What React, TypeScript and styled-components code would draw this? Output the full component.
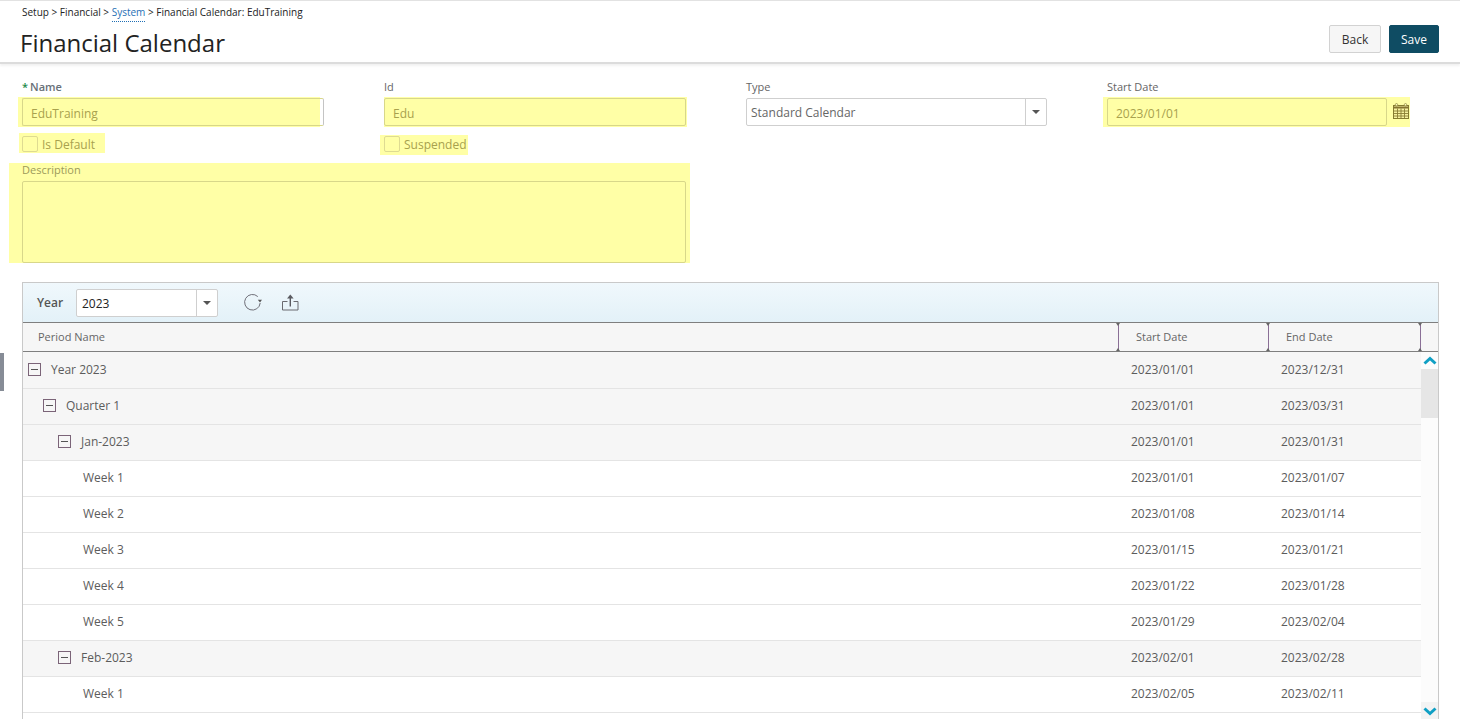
import styled, { createGlobalStyle } from "styled-components";

const GlobalStyle = createGlobalStyle`
  html, body {
    margin: 0;
    padding: 0;
    height: 100%;
    overflow: hidden;
    background: #fff;
    font-family: "Open Sans", "Liberation Sans", sans-serif;
    color: #444;
  }
  * { box-sizing: border-box; }
`;

const Page = styled.div`
  position: relative;
  height: 719px;
  overflow: hidden;
  border-top: 1px solid #e2e2e2;
`;

const SideTab = styled.div`
  position: absolute;
  left: 0;
  top: 352px;
  width: 4px;
  height: 38px;
  background: #868c96;
`;

const Header = styled.header`
  display: flex;
  justify-content: space-between;
  align-items: flex-start;
  height: 63px;
  padding: 0 21px 0 20px;
  border-bottom: 2px solid #dcdcdc;
  box-shadow: 0 2px 2px #f2f2f2;
`;

const Crumbs = styled.div`
  padding: 4px 0 0 2px;
  font-size: 10px;
  line-height: 14px;
  color: #222;
`;

const CrumbLink = styled.span`
  color: #1f6fb5;
  border-bottom: 1px dotted #1f6fb5;
  padding-bottom: 2px;
`;

const Title = styled.h1`
  margin: 8px 0 0;
  font-size: 24px;
  line-height: 32px;
  font-weight: 400;
  color: #222;
`;

const Actions = styled.div`
  display: flex;
  gap: 8px;
  padding-top: 24px;
`;

const Button = styled.button<{ $primary?: boolean }>`
  height: 28px;
  width: ${({ $primary }) => ($primary ? "50px" : "52px")};
  padding: 0;
  font: 12px "Open Sans", sans-serif;
  border-radius: 2px;
  border: 1px solid ${({ $primary }) => ($primary ? "#0f4c63" : "#d2d2d2")};
  background: ${({ $primary }) => ($primary ? "#0f4c63" : "#f6f6f6")};
  color: ${({ $primary }) => ($primary ? "#fff" : "#333")};
`;

const FormGrid = styled.section`
  display: grid;
  grid-template-columns: 362px 362px 361px 332px;
  padding: 16px 0 0 22px;
`;

const Field = styled.div`
  display: flex;
  flex-direction: column;
`;

const Label = styled.label`
  height: 17px;
  font-size: 11px;
  line-height: 14px;
  color: #666;
`;

const RequiredLabel = styled(Label)`
  font-weight: 600;
  color: #687078;
`;

const Star = styled.span`
  color: #1c8a4a;
  margin-right: 2px;
`;

const Highlight = styled.div<{ $left: number; $right: number; $plain?: boolean }>`
  display: flex;
  align-items: flex-start;
  height: 30px;
  padding-top: 1px;
  margin-left: -${({ $left }) => $left}px;
  padding-left: ${({ $left }) => $left}px;
  width: calc(${({ $right }) => $right}px + ${({ $left }) => $left}px);
  background: ${({ $plain }) => ($plain ? "none" : "#ffffa6")};
`;

const TextBox = styled.div<{ $width: number }>`
  flex: none;
  width: ${({ $width }) => $width}px;
  height: 28px;
  padding-left: 8px;
  font-size: 12px;
  line-height: 29px;
  color: #a8a14e;
  border: 1px solid #d8d78a;
  border-radius: 2px;
  background: #ffffa6;
`;

const NameBox = styled(TextBox)`
  border-color: #d8d78a #c4c4c4 #d8d78a #d8d78a;
  background: linear-gradient(to right, #ffffa6 297px, #fff 297px);
`;

const Select = styled.div<{ $width: number }>`
  display: flex;
  width: ${({ $width }) => $width}px;
  height: 28px;
  border: 1px solid #cfcfcf;
  border-radius: 2px;
  background: #fff;
  font-size: 12px;
  line-height: 28px;
`;

const SelectValue = styled.span<{ $dark?: boolean }>`
  flex: 1;
  padding-left: ${({ $dark }) => ($dark ? "5px" : "4px")};
  color: ${({ $dark }) => ($dark ? "#222" : "#666")};
`;

const SelectArrow = styled.span`
  display: flex;
  align-items: center;
  justify-content: center;
  width: 21px;
  border-left: 1px solid #cfcfcf;
  &::after {
    content: "";
    border-left: 4px solid transparent;
    border-right: 4px solid transparent;
    border-top: 4px solid #555;
  }
`;

const CalendarWrap = styled.span`
  display: flex;
  margin: 5px 0 0 6px;
`;

const CheckRow = styled.div<{ $left: number; $right: number; $top: number; $inset: number }>`
  display: flex;
  align-items: flex-start;
  gap: 4px;
  width: fit-content;
  height: 20px;
  margin: ${({ $top }) => $top}px 0 0 -${({ $left }) => $left}px;
  padding: ${({ $inset }) => $inset}px ${({ $right }) => $right}px 0 ${({ $left }) => $left}px;
  background: #ffffa6;
  font-size: 12px;
  line-height: 18px;
  color: #a8a14e;
`;

const CheckBox = styled.span`
  width: 16px;
  height: 16px;
  border: 1px solid #dedb92;
  border-radius: 2px;
`;

const DescriptionBlock = styled.div`
  display: flex;
  flex-direction: column;
  width: 681px;
  height: 100px;
  margin: 8px 0 19px 9px;
  padding: 0 4px 0 13px;
  background: #ffffa6;
`;

const DescriptionLabel = styled.label`
  height: 18px;
  font-size: 11px;
  line-height: 13px;
  color: #9c9a5a;
`;

const DescriptionBox = styled.div`
  flex: 1;
  border: 1px solid #d8d78a;
  border-radius: 2px;
`;

const Panel = styled.section`
  margin: 0 21px 0 22px;
  border: 1px solid #c9c9c9;
  border-bottom: none;
`;

const Toolbar = styled.div`
  display: flex;
  align-items: center;
  height: 40px;
  padding-left: 14px;
  background: linear-gradient(to bottom, #f0f8fc, #e3f1f8);
  border-bottom: 1px solid #7f7f7f;
`;

const ToolbarLabel = styled.span`
  width: 39px;
  font-size: 12px;
  font-weight: 600;
  color: #555;
`;

const ToolIcon = styled.span<{ $gap: number }>`
  display: flex;
  margin-left: ${({ $gap }) => $gap}px;
`;

const ColumnRow = styled.div`
  display: grid;
  grid-template-columns: 1095px 150px 152px 1fr;
  height: 29px;
  background: #f6f6f6;
  border-bottom: 1px solid #7f7f7f;
`;

const ColumnTitle = styled.div<{ $sep?: boolean }>`
  position: relative;
  padding-left: ${({ $sep }) => ($sep ? "17px" : "15px")};
  font-size: 11px;
  line-height: 28px;
  color: #666;
  ${({ $sep }) =>
    $sep &&
    `
    border-left: 1px solid #8a6f96;
    &::before {
      content: "";
      position: absolute;
      left: -3px;
      top: 0;
      border-left: 2.5px solid transparent;
      border-right: 2.5px solid transparent;
      border-top: 3px solid #666;
    }
    &::after {
      content: "";
      position: absolute;
      left: -3px;
      bottom: 0;
      border-left: 2.5px solid transparent;
      border-right: 2.5px solid transparent;
      border-bottom: 3px solid #666;
    }
  `}
`;

const Body = styled.div`
  display: flex;
`;

const Rows = styled.div`
  flex: 1;
  min-width: 0;
  border-top: 1px solid #f6f6f6;
`;

const Row = styled.div<{ $group: boolean }>`
  display: grid;
  grid-template-columns: 1108px 150px 1fr;
  align-items: center;
  height: 36px;
  padding-bottom: 2px;
  font-size: 12px;
  color: #5c5c5c;
  background: ${({ $group }) => ($group ? "#f6f6f6" : "#fff")};
  border-bottom: 1px solid #e4e4e4;
`;

const NameCell = styled.div<{ $indent: number }>`
  display: flex;
  align-items: center;
  padding-left: ${({ $indent }) => $indent}px;
`;

const Toggle = styled.span`
  position: relative;
  width: 13px;
  height: 13px;
  margin-right: 10px;
  border: 1px solid #7b6478;
  &::after {
    content: "";
    position: absolute;
    left: 2px;
    right: 2px;
    top: 5px;
    height: 1px;
    background: #555;
  }
`;

const Scrollbar = styled.div`
  display: flex;
  flex-direction: column;
  align-items: center;
  flex: none;
  width: 17px;
  height: 367px;
  background: #fcfcfc;
`;

const ScrollCap = styled.span<{ $shade?: boolean }>`
  display: flex;
  align-items: center;
  justify-content: center;
  flex: none;
  width: 100%;
  height: 17px;
  background: ${({ $shade }) => ($shade ? "#f3f3f3" : "transparent")};
`;

const ScrollThumb = styled.div`
  flex: none;
  width: 100%;
  height: 49px;
  background: #e6e6e6;
`;

const ScrollTrack = styled.div`
  flex: 1;
`;

function Chevron({ down }: { down?: boolean }) {
  return (
    <svg width="14" height="10" viewBox="0 0 14 10">
      <path
        d={down ? "M1.5 2.5 L7 7.5 L12.5 2.5" : "M1.5 7.5 L7 2.5 L12.5 7.5"}
        fill="none"
        stroke="#0f9fc4"
        strokeWidth="3"
      />
    </svg>
  );
}

function CalendarIcon() {
  return (
    <svg width="16" height="16" viewBox="0 0 16 16">
      <rect x="0.5" y="2.5" width="15" height="13" fill="#f6f2a0" stroke="#857c30" />
      <path d="M0.5 4.5H15.5" stroke="#857430" strokeWidth="2" />
      <path d="M0.5 8H15.5M0.5 10.5H15.5M0.5 13H15.5M4.5 5.5V15.5M8 5.5V15.5M11.5 5.5V15.5" stroke="#8a7e34" strokeWidth="0.9" />
      <circle cx="3.5" cy="1.7" r="1.2" fill="#fdfbc0" stroke="#8c8436" strokeWidth="0.7" />
      <circle cx="12.5" cy="1.7" r="1.2" fill="#fdfbc0" stroke="#8c8436" strokeWidth="0.7" />
    </svg>
  );
}

function RefreshIcon() {
  return (
    <svg width="18" height="17" viewBox="0 0 18 17">
      <path d="M13.8 2.6A7.8 7.8 0 1 0 16.2 9" fill="none" stroke="#6f6f78" strokeWidth="1" />
      <path d="M13.8 5.8 L18 5.8 L16 8.6 Z" fill="#555" />
    </svg>
  );
}

function ExportIcon() {
  return (
    <svg width="17" height="17" viewBox="0 0 17 17">
      <path d="M5.5 7.5H0.5V16H16V7.5H11.5" fill="none" stroke="#6a6a70" />
      <path d="M8.3 12.5V3" fill="none" stroke="#5a5a60" strokeWidth="1.4" />
      <path d="M8.3 0.6L11.6 4.6H5Z" fill="#5a5a60" />
    </svg>
  );
}

interface IPeriod {
  name: string;
  start: string;
  end: string;
  level?: number;
}

const periods: IPeriod[] = [
  { name: "Year 2023", start: "2023/01/01", end: "2023/12/31", level: 0 },
  { name: "Quarter 1", start: "2023/01/01", end: "2023/03/31", level: 1 },
  { name: "Jan-2023", start: "2023/01/01", end: "2023/01/31", level: 2 },
  { name: "Week 1", start: "2023/01/01", end: "2023/01/07" },
  { name: "Week 2", start: "2023/01/08", end: "2023/01/14" },
  { name: "Week 3", start: "2023/01/15", end: "2023/01/21" },
  { name: "Week 4", start: "2023/01/22", end: "2023/01/28" },
  { name: "Week 5", start: "2023/01/29", end: "2023/02/04" },
  { name: "Feb-2023", start: "2023/02/01", end: "2023/02/28", level: 2 },
  { name: "Week 1", start: "2023/02/05", end: "2023/02/11" },
];

export default function App() {
  function renderRows() {
    return periods.map((period, index) => {
      const isGroup = period.level !== undefined;
      const indent = isGroup ? 5 + (period.level as number) * 15 : 60;
      return (
        <Row key={index} $group={isGroup}>
          <NameCell $indent={indent}>
            {isGroup && <Toggle />}
            {period.name}
          </NameCell>
          <span>{period.start}</span>
          <span>{period.end}</span>
        </Row>
      );
    });
  }

  return (
    <Page>
      <GlobalStyle />
      <SideTab />
      <Header>
        <div>
          <Crumbs>
            Setup &gt; Financial &gt; <CrumbLink>System</CrumbLink> &gt; Financial Calendar: EduTraining
          </Crumbs>
          <Title>Financial Calendar</Title>
        </div>
        <Actions>
          <Button>Back</Button>
          <Button $primary>Save</Button>
        </Actions>
      </Header>

      <FormGrid>
        <Field>
          <RequiredLabel>
            <Star>*</Star>Name
          </RequiredLabel>
          <Highlight $left={4} $right={298}>
            <NameBox $width={302}>EduTraining</NameBox>
          </Highlight>
          <CheckRow $left={3} $right={10} $top={6} $inset={3}>
            <CheckBox />
            Is Default
          </CheckRow>
        </Field>
        <Field>
          <Label>Id</Label>
          <Highlight $left={0} $right={303}>
            <TextBox $width={302}>Edu</TextBox>
          </Highlight>
          <CheckRow $left={4} $right={1} $top={8} $inset={1}>
            <CheckBox />
            Suspended
          </CheckRow>
        </Field>
        <Field>
          <Label>Type</Label>
          <Highlight $left={0} $right={302} $plain>
            <Select $width={301}>
              <SelectValue>Standard Calendar</SelectValue>
              <SelectArrow />
            </Select>
          </Highlight>
        </Field>
        <Field>
          <Label>Start Date</Label>
          <Highlight $left={4} $right={303}>
            <TextBox $width={280}>2023/01/01</TextBox>
            <CalendarWrap>
              <CalendarIcon />
            </CalendarWrap>
          </Highlight>
        </Field>
      </FormGrid>

      <DescriptionBlock>
        <DescriptionLabel>Description</DescriptionLabel>
        <DescriptionBox />
      </DescriptionBlock>

      <Panel>
        <Toolbar>
          <ToolbarLabel>Year</ToolbarLabel>
          <Select $width={142}>
            <SelectValue $dark>2023</SelectValue>
            <SelectArrow />
          </Select>
          <ToolIcon $gap={26}>
            <RefreshIcon />
          </ToolIcon>
          <ToolIcon $gap={20}>
            <ExportIcon />
          </ToolIcon>
        </Toolbar>
        <ColumnRow>
          <ColumnTitle>Period Name</ColumnTitle>
          <ColumnTitle $sep>Start Date</ColumnTitle>
          <ColumnTitle $sep>End Date</ColumnTitle>
          <ColumnTitle $sep />
        </ColumnRow>
        <Body>
          <Rows>{renderRows()}</Rows>
          <Scrollbar>
            <ScrollCap>
              <Chevron />
            </ScrollCap>
            <ScrollThumb />
            <ScrollTrack />
            <ScrollCap $shade>
              <Chevron down />
            </ScrollCap>
          </Scrollbar>
        </Body>
      </Panel>
    </Page>
  );
}
